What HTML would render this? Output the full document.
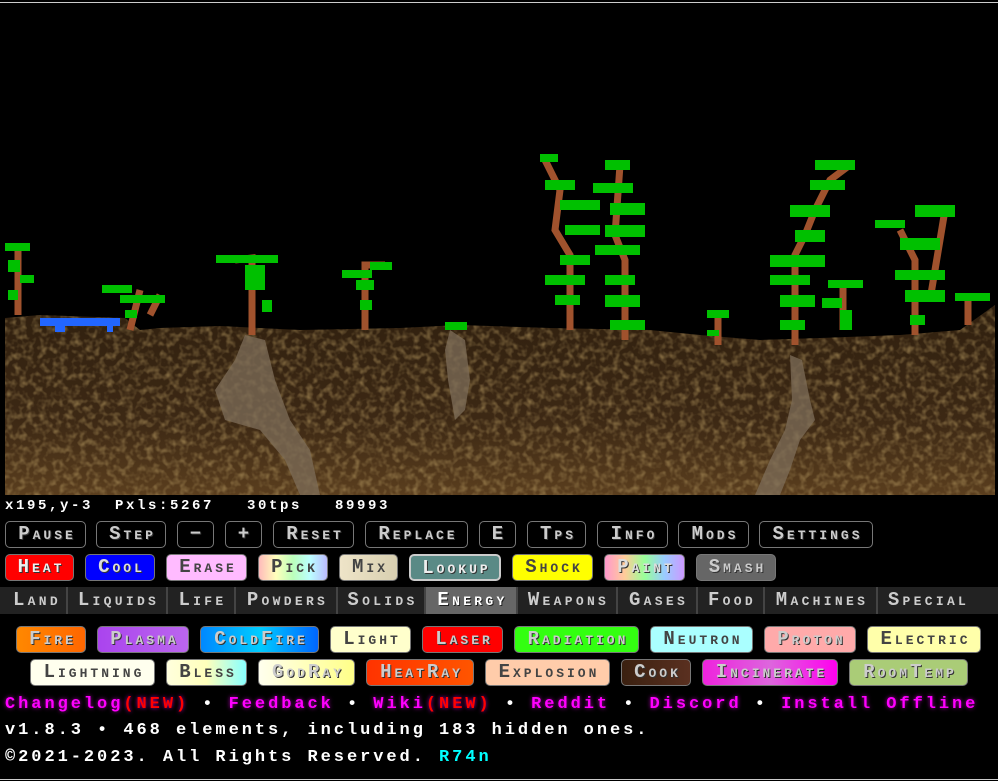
<!DOCTYPE html>
<html><head><meta charset="utf-8"><style>
*{margin:0;padding:0;box-sizing:border-box}
body{width:998px;height:781px;background:#000;overflow:hidden;position:relative;font-family:"Liberation Mono",monospace;color:#fff}
.b{position:absolute;height:27px;border:1px solid #777;border-radius:5px;color:#ddd;font-weight:bold;font-variant:small-caps;font-size:19px;line-height:25px;text-align:center;letter-spacing:3px;text-indent:3px;text-shadow:1px 1px 0 #333;white-space:nowrap;overflow:hidden}
.r1{top:521px;background:#000;color:#ccc}
.r2{top:554px}
.e1{top:626px}.e2{top:659px}
.c{position:absolute;top:587px;height:27px;font-weight:bold;font-variant:small-caps;font-size:19px;line-height:27px;text-align:center;color:#ccc;border-right:2px solid #444;text-shadow:1px 1px 0 #222;letter-spacing:3.3px;text-indent:3px;white-space:nowrap}
.t{position:absolute;left:5px;font-weight:bold;font-size:17px;letter-spacing:2.95px;white-space:pre}
.m{color:#f0f;text-shadow:0 0 4px #a0a}
</style></head><body>
<div style="position:absolute;top:2px;left:0;width:998px;height:1px;background:#ccc"></div>
<svg style="position:absolute;left:0;top:0" width="998" height="496">
<defs><linearGradient id="g" x1="0" y1="0" x2="0" y2="1"><stop offset="0" stop-color="#30200f"/><stop offset=".6" stop-color="#3c2814"/><stop offset="1" stop-color="#5a3e1e"/></linearGradient>
<filter id="n"><feTurbulence type="fractalNoise" baseFrequency="0.15" numOctaves="2" seed="3"/><feColorMatrix values="0 0 0 0 0.4  0 0 0 0 0.27  0 0 0 0 0.1  0 0 0 1.4 -0.6"/><feComposite in2="SourceGraphic" operator="in"/></filter></defs>
<polygon fill="url(#g)" points="5,318 40,315 125,318 140,330 160,328 220,326 300,330 400,328 460,325 550,328 650,330 700,335 760,340 820,338 900,335 960,330 995,305 995,495 5,495"/>
<polygon filter="url(#n)" fill="#000" points="5,318 40,315 125,318 140,330 160,328 220,326 300,330 400,328 460,325 550,328 650,330 700,335 760,340 820,338 900,335 960,330 995,305 995,495 5,495"/>
<polygon fill="#7d6e5a" opacity=".75" points="245,335 265,340 275,380 290,420 310,450 320,495 300,495 285,460 260,430 225,420 215,390 235,360"/>
<polygon fill="#7d6e5a" opacity=".75" points="450,330 465,340 470,380 465,410 455,420 448,380 445,350"/>
<polygon fill="#7d6e5a" opacity=".75" points="790,355 802,360 810,400 815,420 800,440 790,470 780,495 755,495 770,460 785,430 792,400"/>
<rect x="40" y="318" width="80" height="8" fill="#2266ff"/><rect x="55" y="326" width="10" height="6" fill="#2266ff"/><rect x="107" y="326" width="6" height="6" fill="#2266ff"/>
<g fill="none" stroke="#a0522d" stroke-width="7">
<polyline points="18,315 18,245"/><polyline points="130,330 140,290"/><polyline points="150,315 160,295"/>
<polyline points="252,335 252,258 235,260"/><polyline points="365,330 365,265 385,265"/>
<polyline points="570,330 570,255 555,230 560,190 545,160"/><polyline points="625,340 625,260 615,235 620,165"/>
<polyline points="718,345 718,312"/><polyline points="795,345 795,255 805,235 815,210 830,180 850,165"/>
<polyline points="843,330 843,285"/><polyline points="915,335 915,260 900,230"/><polyline points="930,300 945,210"/><polyline points="968,325 968,295"/>
</g>
<g fill="#00c000">
<rect x="5" y="243" width="25" height="8"/><rect x="8" y="260" width="12" height="12"/><rect x="20" y="275" width="14" height="8"/><rect x="8" y="290" width="10" height="10"/>
<rect x="102" y="285" width="30" height="8"/><rect x="120" y="295" width="45" height="8"/><rect x="125" y="310" width="12" height="8"/>
<rect x="216" y="255" width="62" height="8"/><rect x="245" y="265" width="20" height="25"/><rect x="262" y="300" width="10" height="12"/>
<rect x="342" y="270" width="30" height="8"/><rect x="370" y="262" width="22" height="8"/><rect x="356" y="280" width="18" height="10"/><rect x="360" y="300" width="12" height="10"/>
<rect x="445" y="322" width="22" height="8"/>
<rect x="540" y="154" width="18" height="8"/><rect x="545" y="180" width="30" height="10"/><rect x="560" y="200" width="40" height="10"/><rect x="565" y="225" width="35" height="10"/><rect x="560" y="255" width="30" height="10"/><rect x="545" y="275" width="40" height="10"/><rect x="555" y="295" width="25" height="10"/>
<rect x="605" y="160" width="25" height="10"/><rect x="593" y="183" width="40" height="10"/><rect x="610" y="203" width="35" height="12"/><rect x="605" y="225" width="40" height="12"/><rect x="595" y="245" width="45" height="10"/><rect x="605" y="275" width="30" height="10"/><rect x="605" y="295" width="35" height="12"/><rect x="610" y="320" width="35" height="10"/>
<rect x="707" y="310" width="22" height="8"/><rect x="707" y="330" width="12" height="6"/>
<rect x="815" y="160" width="40" height="10"/><rect x="810" y="180" width="35" height="10"/><rect x="790" y="205" width="40" height="12"/><rect x="795" y="230" width="30" height="12"/><rect x="770" y="255" width="55" height="12"/><rect x="770" y="275" width="40" height="10"/><rect x="780" y="295" width="35" height="12"/><rect x="780" y="320" width="25" height="10"/>
<rect x="828" y="280" width="35" height="8"/><rect x="822" y="298" width="20" height="10"/><rect x="840" y="310" width="12" height="20"/>
<rect x="875" y="220" width="30" height="8"/><rect x="900" y="238" width="40" height="12"/><rect x="915" y="205" width="40" height="12"/><rect x="895" y="270" width="50" height="10"/><rect x="905" y="290" width="40" height="12"/><rect x="910" y="315" width="15" height="10"/>
<rect x="955" y="293" width="35" height="8"/>
</g>
</svg>
<div class="t" style="top:498px;font-size:14px;letter-spacing:2.6px">x195,y-3  Pxls:5267   30tps   89993</div>

<div class="b r1" style="left:5px;width:81px">Pause</div>
<div class="b r1" style="left:96px;width:70px">Step</div>
<div class="b r1" style="left:177px;width:37px">−</div>
<div class="b r1" style="left:225px;width:37px">+</div>
<div class="b r1" style="left:273px;width:81px">Reset</div>
<div class="b r1" style="left:365px;width:103px">Replace</div>
<div class="b r1" style="left:479px;width:37px">E</div>
<div class="b r1" style="left:527px;width:59px">Tps</div>
<div class="b r1" style="left:597px;width:71px">Info</div>
<div class="b r1" style="left:678px;width:71px">Mods</div>
<div class="b r1" style="left:759px;width:114px">Settings</div>

<div class="b r2" style="left:5px;width:69px;background:#f00;color:#eee">Heat</div>
<div class="b r2" style="left:85px;width:70px;background:#00f;color:#ddd">Cool</div>
<div class="b r2" style="left:166px;width:81px;background:#fbf;color:#444;text-shadow:none">Erase</div>
<div class="b r2" style="left:258px;width:70px;background:linear-gradient(90deg,#fbb,#ffb,#bfb,#bff,#bbf);color:#444;text-shadow:none">Pick</div>
<div class="b r2" style="left:339px;width:59px;background:linear-gradient(90deg,#eee4c8,#d8cfb0);color:#444;text-shadow:none">Mix</div>
<div class="b r2" style="left:409px;width:92px;background:#5a8a86;border:2px solid #ccc;color:#eee">Lookup</div>
<div class="b r2" style="left:512px;width:81px;background:#ff0;color:#444;text-shadow:none">Shock</div>
<div class="b r2" style="left:604px;width:81px;background:linear-gradient(90deg,#f9c,#fc9,#9f9,#9cf,#c9f);color:#ddd">Paint</div>
<div class="b r2" style="left:696px;width:80px;background:#666;color:#ccc">Smash</div>

<div style="position:absolute;top:587px;left:0;width:998px;height:27px;background:#222"></div>
<div class="c" style="left:5px;width:63px">Land</div>
<div class="c" style="left:68px;width:100px">Liquids</div>
<div class="c" style="left:168px;width:68px">Life</div>
<div class="c" style="left:236px;width:102px">Powders</div>
<div class="c" style="left:338px;width:88px">Solids</div>
<div class="c" style="left:426px;width:92px;background:#666;color:#fff">Energy</div>
<div class="c" style="left:518px;width:100px">Weapons</div>
<div class="c" style="left:618px;width:80px">Gases</div>
<div class="c" style="left:698px;width:67px">Food</div>
<div class="c" style="left:765px;width:113px">Machines</div>
<div class="c" style="left:878px;width:98px;border:none">Special</div>

<div class="b e1" style="left:16px;width:70px;background:linear-gradient(90deg,#f80,#f60);color:#ccc">Fire</div>
<div class="b e1" style="left:97px;width:92px;background:linear-gradient(90deg,#a4e,#b6e);color:#ccc">Plasma</div>
<div class="b e1" style="left:200px;width:119px;background:linear-gradient(90deg,#08f,#0cf,#06f);color:#ccc">ColdFire</div>
<div class="b e1" style="left:330px;width:81px;background:#ffc;color:#444;text-shadow:none">Light</div>
<div class="b e1" style="left:422px;width:81px;background:#f00;color:#ccc">Laser</div>
<div class="b e1" style="left:514px;width:125px;background:#3f1;color:#ccc">Radiation</div>
<div class="b e1" style="left:650px;width:103px;background:#aff;color:#444;text-shadow:none">Neutron</div>
<div class="b e1" style="left:764px;width:92px;background:#faa;color:#ccc">Proton</div>
<div class="b e1" style="left:867px;width:114px;background:#ffa;color:#444;text-shadow:none">Electric</div>

<div class="b e2" style="left:30px;width:125px;background:#ffe;color:#444;text-shadow:none">Lightning</div>
<div class="b e2" style="left:166px;width:81px;background:linear-gradient(90deg,#ffd,#ffb,#8ff);color:#444;text-shadow:none">Bless</div>
<div class="b e2" style="left:258px;width:97px;background:linear-gradient(90deg,#ffe,#ffb,#ff8);color:#ccc">GodRay</div>
<div class="b e2" style="left:366px;width:108px;background:linear-gradient(90deg,#f30,#f50);color:#ccc">HeatRay</div>
<div class="b e2" style="left:485px;width:125px;background:#fca;color:#444;text-shadow:none">Explosion</div>
<div class="b e2" style="left:621px;width:70px;background:linear-gradient(90deg,#3a2010,#5a3020);color:#ccc">Cook</div>
<div class="b e2" style="left:702px;width:136px;background:linear-gradient(90deg,#e2d,#d6d,#f0e);color:#ccc">Incinerate</div>
<div class="b e2" style="left:849px;width:119px;background:#ac7;color:#ccc">RoomTemp</div>

<div class="t" style="top:695px"><span class="m">Changelog<span style="color:#f00">(NEW)</span></span> • <span class="m">Feedback</span> • <span class="m">Wiki<span style="color:#f00">(NEW)</span></span> • <span class="m">Reddit</span> • <span class="m">Discord</span> • <span class="m">Install Offline</span></div>
<div class="t" style="top:721px">v1.8.3 • 468 elements, including 183 hidden ones.</div>
<div class="t" style="top:748px">©2021-2023. All Rights Reserved. <span style="color:#0ff">R74n</span></div>
<div style="position:absolute;top:779px;left:0;width:998px;height:1px;background:#ccc"></div>
</body></html>
